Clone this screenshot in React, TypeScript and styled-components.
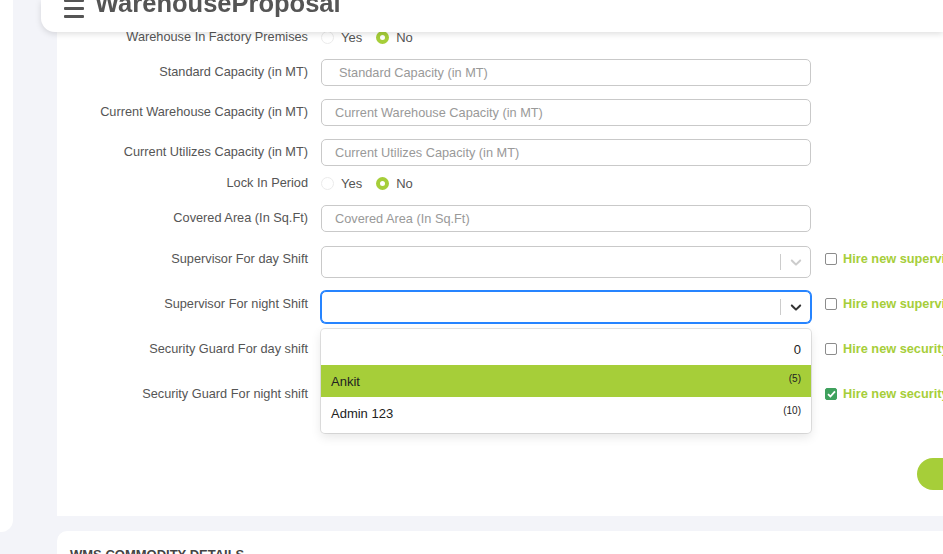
import React from "react";
import styled, { createGlobalStyle } from "styled-components";

const green = "#a6ce39";

const GlobalStyle = createGlobalStyle`
  html, body {
    margin: 0;
    padding: 0;
    background: #f3f4f9;
    overflow: hidden;
  }
  body {
    font-family: "Liberation Sans", Arial, sans-serif;
  }
  * {
    box-sizing: border-box;
  }
`;

const Page = styled.div`
  display: grid;
  grid-template-columns: 13px 1fr;
  column-gap: 44px;
  width: 943px;
  height: 554px;
  overflow: hidden;
`;

const Sidebar = styled.aside`
  height: 532px;
  background: #fff;
  border-bottom-right-radius: 12px;
`;

const Main = styled.main`
  display: flex;
  flex-direction: column;
  gap: 15px;
  min-width: 0;
`;

const Header = styled.header`
  position: fixed;
  top: 0;
  left: 41px;
  right: 0;
  height: 32px;
  display: flex;
  align-items: flex-start;
  gap: 11px;
  padding-left: 23px;
  background: #fff;
  border-bottom-left-radius: 14px;
  box-shadow: 0 2px 6px rgba(0, 0, 0, 0.13);
  overflow: hidden;
  z-index: 10;
`;

const Burger = styled.svg`
  flex: none;
  margin-top: -1px;
  color: #555;
`;

const Title = styled.h1`
  margin: -9px 0 0;
  font-size: 25.5px;
  line-height: 25px;
  font-weight: 700;
  color: #555;
`;

const Card = styled.section`
  position: relative;
  height: 516px;
  padding-top: 24px;
  background: #fff;
`;

const Row = styled.div<{ $mb: number }>`
  display: grid;
  grid-template-columns: 251px 490px auto;
  column-gap: 13px;
  align-items: start;
  margin-bottom: ${(p) => p.$mb}px;
`;

const Label = styled.label`
  padding-top: 5px;
  font-size: 12.75px;
  line-height: 15px;
  color: #555;
  text-align: right;
  white-space: nowrap;
`;

const RadioGroup = styled.div`
  display: flex;
  align-items: center;
  gap: 14px;
  padding-top: 4px;
  height: 22px;
  font-size: 13px;
  line-height: 13px;
  color: #555;
`;

const RadioItem = styled.span`
  display: flex;
  align-items: center;
  gap: 7px;
`;

const RadioDot = styled.span<{ $on?: boolean }>`
  width: 13px;
  height: 13px;
  border-radius: 50%;
  background: #fff;
  border: ${(p) => (p.$on ? `4px solid ${green}` : "1px solid #ebebeb")};
`;

const TextInput = styled.input<{ $indent?: boolean }>`
  display: block;
  width: 100%;
  height: 27px;
  padding: 0 ${(p) => (p.$indent ? 17 : 13)}px;
  border: 1px solid #c9c9c9;
  border-radius: 5px;
  font-family: inherit;
  font-size: 12.75px;
  color: #333;
  outline: none;
  &::placeholder {
    color: #999;
  }
`;

const SelectWrap = styled.div`
  position: relative;
`;

const Control = styled.div<{ $focused?: boolean }>`
  display: flex;
  align-items: stretch;
  height: 32px;
  background: #fff;
  border: 1px solid ${(p) => (p.$focused ? "#2684ff" : "#c9c9c9")};
  border-radius: 5px;
  box-shadow: ${(p) => (p.$focused ? "0 0 0 1px #2684ff" : "none")};
`;

const ValueBox = styled.div`
  flex: 1;
`;

const Separator = styled.span`
  width: 1px;
  margin: 7px 0;
  background: #ccc;
`;

const Indicator = styled.span<{ $focused?: boolean }>`
  display: flex;
  align-items: center;
  justify-content: center;
  width: 29px;
  color: ${(p) => (p.$focused ? "#333" : "#ccc")};
`;

const Menu = styled.div`
  position: absolute;
  top: calc(100% + 6px);
  left: 0;
  right: 0;
  padding: 4px 0;
  background: #fff;
  border-radius: 4px;
  box-shadow: 0 0 0 1px rgba(0, 0, 0, 0.1), 0 4px 11px rgba(0, 0, 0, 0.1);
  z-index: 5;
`;

const Option = styled.div<{ $active?: boolean }>`
  display: flex;
  align-items: center;
  height: 32px;
  padding: 0 10px;
  font-size: 13px;
  color: #222;
  background: ${(p) => (p.$active ? green : "transparent")};
`;

const OptionName = styled.span`
  flex: 1;
`;

const Count = styled.span<{ $plain?: boolean }>`
  font-size: ${(p) => (p.$plain ? 13 : 10)}px;
  margin-bottom: ${(p) => (p.$plain ? 0 : 5)}px;
`;

const CheckItem = styled.label`
  display: flex;
  align-items: center;
  gap: 6px;
  margin-left: 1px;
  padding-top: 5px;
  font-size: 12.75px;
  line-height: 15px;
  font-weight: 700;
  color: ${green};
  white-space: nowrap;
`;

const Box = styled.span<{ $on?: boolean }>`
  display: flex;
  align-items: center;
  justify-content: center;
  width: 12px;
  height: 12px;
  border-radius: 2px;
  border: 1px solid ${(p) => (p.$on ? "#3fa15d" : "#8c8c8c")};
  background: ${(p) => (p.$on ? "#3fa15d" : "#fff")};
`;

const ButtonRow = styled.div`
  display: flex;
  justify-content: flex-end;
  margin-top: 45px;
`;

const SaveButton = styled.button`
  width: 86px;
  height: 32px;
  margin-right: -60px;
  border: none;
  border-radius: 16px;
  background: ${green};
`;

const BottomCard = styled.section`
  flex: 1;
  padding: 16px 13px;
  background: #fff;
  border-top-left-radius: 10px;
`;

const SectionTitle = styled.h2`
  margin: 0;
  font-size: 13px;
  line-height: 15px;
  font-weight: 700;
  color: #444;
`;

const Chevron = () => (
  <svg width="18" height="18" viewBox="0 0 20 20" fill="currentColor">
    <path d="M4.516 7.548c0.436-0.446 1.043-0.481 1.576 0l3.908 3.747 3.908-3.747c0.533-0.481 1.141-0.446 1.574 0 0.436 0.445 0.408 1.197 0 1.615-0.406 0.418-4.695 4.502-4.695 4.502-0.217 0.223-0.502 0.335-0.787 0.335s-0.57-0.112-0.789-0.335c0 0-4.287-4.084-4.695-4.502s-0.436-1.17 0-1.615z" />
  </svg>
);

const Check = ({ on, text }: { on?: boolean; text: string }) => (
  <CheckItem>
    <Box $on={on}>
      {on && (
        <svg width="9" height="8" viewBox="0 0 9 8">
          <path d="M1 4.2 3.4 6.5 8 1.3" fill="none" stroke="#fff" strokeWidth="1.8" />
        </svg>
      )}
    </Box>
    {text}
  </CheckItem>
);

type SelectProps = { focused?: boolean; children?: React.ReactNode };

const Select = ({ focused, children }: SelectProps) => (
  <SelectWrap>
    <Control $focused={focused}>
      <ValueBox />
      <Separator />
      <Indicator $focused={focused}>
        <Chevron />
      </Indicator>
    </Control>
    {children}
  </SelectWrap>
);

const YesNo = () => (
  <RadioGroup>
    <RadioItem>
      <RadioDot />
      Yes
    </RadioItem>
    <RadioItem>
      <RadioDot $on />
      No
    </RadioItem>
  </RadioGroup>
);

const options = [
  { name: "", count: "0", plain: true },
  { name: "Ankit", count: "(5)", active: true },
  { name: "Admin 123", count: "(10)" },
];

export default function App() {
  return (
    <>
      <GlobalStyle />
      <Header>
        <Burger width="20" height="19" viewBox="0 0 20 19" fill="currentColor">
          <rect x="0" y="0" width="20" height="3" rx="1" />
          <rect x="0" y="8" width="20" height="3" rx="1" />
          <rect x="0" y="16" width="20" height="3" rx="1" />
        </Burger>
        <Title>WarehouseProposal</Title>
      </Header>
      <Page>
        <Sidebar />
        <Main>
          <Card>
            <Row $mb={13}>
              <Label>Warehouse In Factory Premises</Label>
              <YesNo />
            </Row>
            <Row $mb={13}>
              <Label>Standard Capacity (in MT)</Label>
              <TextInput $indent placeholder="Standard Capacity (in MT)" />
            </Row>
            <Row $mb={13}>
              <Label>Current Warehouse Capacity (in MT)</Label>
              <TextInput placeholder="Current Warehouse Capacity (in MT)" />
            </Row>
            <Row $mb={4}>
              <Label>Current Utilizes Capacity (in MT)</Label>
              <TextInput placeholder="Current Utilizes Capacity (in MT)" />
            </Row>
            <Row $mb={13}>
              <Label>Lock In Period</Label>
              <YesNo />
            </Row>
            <Row $mb={14}>
              <Label>Covered Area (In Sq.Ft)</Label>
              <TextInput placeholder="Covered Area (In Sq.Ft)" />
            </Row>
            <Row $mb={13}>
              <Label>Supervisor For day Shift</Label>
              <Select />
              <Check text="Hire new supervisor" />
            </Row>
            <Row $mb={13} style={{ position: "relative", zIndex: 3 }}>
              <Label>Supervisor For night Shift</Label>
              <Select focused>
                <Menu>
                  {options.map((o) => (
                    <Option key={o.count} $active={o.active}>
                      <OptionName>{o.name}</OptionName>
                      <Count $plain={o.plain}>{o.count}</Count>
                    </Option>
                  ))}
                </Menu>
              </Select>
              <Check text="Hire new supervisor" />
            </Row>
            <Row $mb={13}>
              <Label>Security Guard For day shift</Label>
              <Select />
              <Check text="Hire new security guard" />
            </Row>
            <Row $mb={0}>
              <Label>Security Guard For night shift</Label>
              <Select />
              <Check on text="Hire new security guard" />
            </Row>
            <ButtonRow>
              <SaveButton />
            </ButtonRow>
          </Card>
          <BottomCard>
            <SectionTitle>WMS COMMODITY DETAILS</SectionTitle>
          </BottomCard>
        </Main>
      </Page>
    </>
  );
}
